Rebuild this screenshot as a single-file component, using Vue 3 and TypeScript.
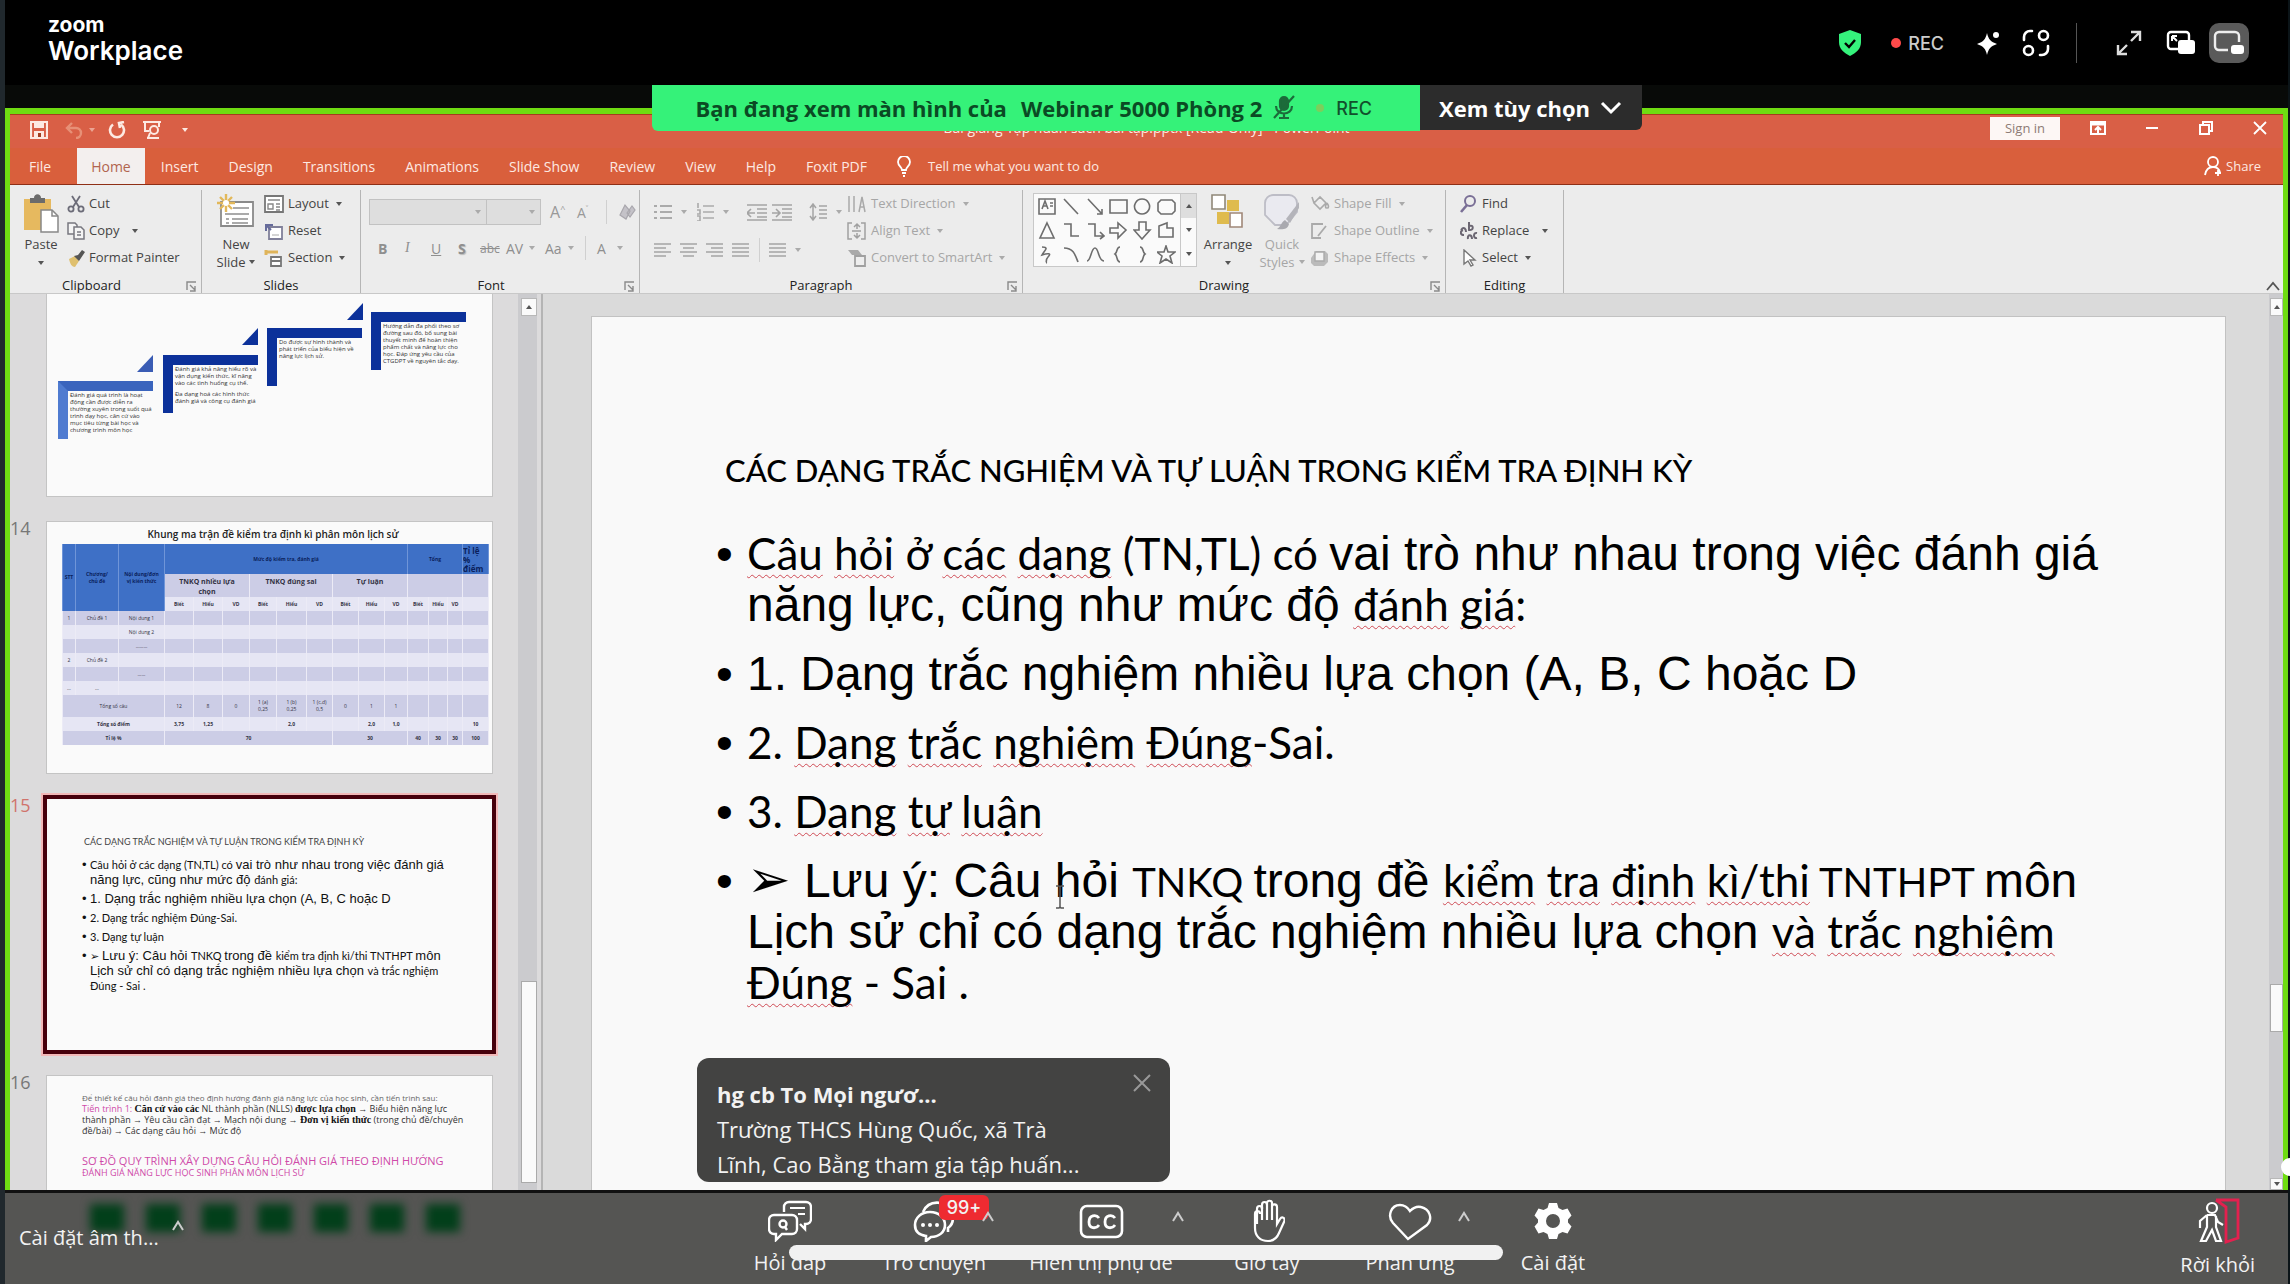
<script setup lang="ts">
import { h, type FunctionalComponent } from 'vue'

const icons: Record<string, string> = {
  shield: '<path d="M12 0 L23 4 V12 C23 19 18 23 12 26 C6 23 1 19 1 12 V4 Z" fill="#35f27c"/><path d="M7 13l4 4 6-7" fill="none" stroke="#000" stroke-width="2.4"/>',
  sparkle: '<path d="M11 3c1.500 6.500 3.500 8.500 10 11-6.500 2.500-8.500 4.500-10 11-1.500-6.500-3.500-8.500-10-11C7.500 11.500 9.500 9.500 11 3z" fill="#fff"/><circle cx="20" cy="5" r="3" fill="#fff"/>',
  apps: '<g fill="none" stroke="#fff" stroke-width="2.600" stroke-linecap="round"><path d="M10 2H8a6 6 0 0 0-6 6v3"/><path d="M26 17v3a6 6 0 0 1-6 6h-2"/><rect x="17" y="2" width="9" height="9" rx="4.500"/><rect x="2" y="17" width="9" height="9" rx="4.500"/></g>',
  expand: '<g fill="none" stroke="#ddd" stroke-width="2.400"><path d="M15 2h9v9M24 2L15 11M11 24H2v-9M2 24l9-9"/></g>',
  pipDark: '<rect x="2" y="2" width="21" height="17" rx="3" fill="none" stroke="#fff" stroke-width="2.400"/><path d="M6 6h5M6 6v5M6 6l5 5" stroke="#fff" stroke-width="2" fill="none"/><rect x="12" y="10" width="17" height="14" rx="3" fill="#fff"/>',
  pip: '<path d="M15 20H6a4 4 0 0 1-4-4V6a4 4 0 0 1 4-4h16a4 4 0 0 1 4 4v6" fill="none" stroke="#eee" stroke-width="2.400"/><rect x="18" y="15" width="13" height="9" rx="3" fill="#fff"/>',
  mic: '<g stroke="#1c6b3a" fill="none" stroke-width="2.200"><rect x="8" y="2" width="8" height="13" rx="4" fill="#1c6b3a"/><path d="M4 11c0 10 16 10 16 0M12 19v4M7 23h10M2 23L22 1"/></g>',
  down: '<path d="M2 3l9 9 9-9" fill="none" stroke="#fff" stroke-width="3"/>',
  save: '<path d="M1 1h16v16H1z" fill="none" stroke="#fde9e2" stroke-width="2.200"/><path d="M4 1h10v6H4z" fill="#fde9e2"/><path d="M4 10h10v7H4z" fill="#fde9e2"/><path d="M8 12h3v4H8z" fill="#a23f22"/>',
  undo: '<path d="M7 2L2 7l5 5M2 7h9a5 5 0 0 1 0 10" fill="none" stroke="#e79077" stroke-width="2.400"/>',
  redo: '<path d="M5 3.500A7 7 0 1 0 13 3.500M16 1l-5 1 1 5" fill="none" stroke="#fde9e2" stroke-width="2.600"/>',
  show: '<g fill="none" stroke="#fde9e2" stroke-width="2"><path d="M0 1h18M2 2v8h4M16 2v4"/><circle cx="11" cy="9" r="4"/><path d="M4 17h12M7 12l-2 5"/></g>',
  ribbonOpt: '<path d="M1 1h14v12H1z" fill="none" stroke="#fff" stroke-width="2"/><path d="M1 3h14" stroke="#fff" stroke-width="3"/><path d="M8 12V6M5 9l3-3 3 3" stroke="#fff" stroke-width="2" fill="none"/>',
  min: '<path d="M2 8h12" stroke="#fff" stroke-width="2"/>',
  restore: '<path d="M2 5h9v9H2zM5 5V2h9v9h-3" fill="none" stroke="#fff" stroke-width="2"/>',
  close: '<path d="M2 2l12 12M14 2L2 14" stroke="#fff" stroke-width="1.800"/>',
  share: '<g fill="none" stroke="#fff" stroke-width="1.800"><circle cx="9" cy="6" r="5"/><path d="M1 19c1-6 4-8 8-8s6 2 7 5M14 14v6M11 17h6"/></g>',
  bulb: '<g fill="none" stroke="#fff" stroke-width="1.800"><path d="M5 14c0-3-4-4-4-8a6 6 0 0 1 12 0c0 4-4 5-4 8zM5 17h4M6 20h2"/></g>',
  paste: '<path d="M1 5h27v31H1z" fill="#e6b95f"/><path d="M7 9V4h4c0-5 7-5 7 0h4v5z" fill="#6b6b6b"/><path d="M18 16h11l6 6v16H18z" fill="#fff" stroke="#888" stroke-width="1.500"/><path d="M29 16v6h6" fill="none" stroke="#888" stroke-width="1.500"/>',
  cut: '<g fill="none" stroke="#6c6c78" stroke-width="1.800"><path d="M5 1l7 11M13 1L6 12"/><circle cx="4" cy="14" r="2.600"/><circle cx="14" cy="14" r="2.600"/></g>',
  copy: '<g fill="#f4f4f4" stroke="#77777f" stroke-width="1.500"><path d="M1 1h7l2 2v9H1z"/><path d="M7 5h7l3 3v9H7z"/><path d="M10 10h4M10 13h4"/></g>',
  painter: '<path d="M2 10l6-3 4 5-4 6c-3 0-5-3-6-8z" fill="#dfc06f"/><path d="M7 7l5 5 2-3 4-6-3-2-4 5z" fill="#555"/>',
  newSlide: '<path d="M4 8h32v24H4z" fill="#fff" stroke="#8a8a8a" stroke-width="1.800"/><path d="M16 14h16M8 20h24M9 25h3M15 25h16M9 29h3M15 29h16" stroke="#aaa" stroke-width="1.800"/><g stroke="#e2b85a" stroke-width="2.400"><path d="M9 0v18M0 9h18M3 3l12 12M15 3L3 15"/></g><circle cx="9" cy="9" r="3" fill="#fff"/>',
  layout: '<path d="M1 1h18v16H1z" fill="#fff" stroke="#777" stroke-width="1.800"/><path d="M4 5h12M4 9h5v5H4zM12 9h4M12 12h4M12 15h4" fill="none" stroke="#888" stroke-width="1.400"/>',
  reset: '<path d="M5 5h13v12H5z" fill="#fff" stroke="#80809a" stroke-width="1.800"/><path d="M2 9V3h7M2 3l5 5" stroke="#666b9b" stroke-width="2" fill="none"/><path d="M8 13h7" stroke="#aaa"/>',
  section: '<path d="M2 3h12M2 1v5" stroke="#dfb45a" stroke-width="3"/><path d="M7 8h10v9H7zM7 12h10" fill="#fff" stroke="#777" stroke-width="1.800"/>',
  launch: '<path d="M1 9V1h9M4 4l5 5M9 5v5H4" fill="none" stroke="#8a8a8a" stroke-width="1.400"/>',
  eraser: '<path d="M2 12l5-10 5 6-4 8zM9 10l5-7 3 4-5 7z" fill="#c4c2c8" stroke="#a9a7ad" stroke-width="1.200"/>',
  bullets: '<path d="M0 3h3M0 9h3M0 15h3M6 3h12M6 9h12M6 15h12" stroke="#aaa" stroke-width="1.800"/>',
  numbers: '<path d="M2 0v5M1 7h3v4H1M1 13h3v5H1M7 3h11M7 9h11M7 15h11" fill="none" stroke="#aaa" stroke-width="1.600"/>',
  outdent: '<path d="M0 2h20M10 6h10M10 10h10M10 14h10M0 17h20M8 10H1M4 6l-4 4 4 4" fill="none" stroke="#a4a4a4" stroke-width="1.600"/>',
  indent: '<path d="M0 2h20M10 6h10M10 10h10M10 14h10M0 17h20M0 10h7M4 6l4 4-4 4" fill="none" stroke="#a4a4a4" stroke-width="1.600"/>',
  spacing: '<path d="M4 2v14M1 5l3-4 3 4M1 13l3 4 3-4M10 3h8M10 7h8M10 11h8M10 15h8" fill="none" stroke="#a4a4a4" stroke-width="1.500"/>',
  alignL: '<path d="M0 2h17M0 6h12M0 10h17M0 14h12" stroke="#a4a4a4" stroke-width="1.600"/>',
  alignC: '<path d="M0 2h17M3 6h11M0 10h17M3 14h11" stroke="#a4a4a4" stroke-width="1.600"/>',
  alignR: '<path d="M0 2h17M5 6h12M0 10h17M5 14h12" stroke="#a4a4a4" stroke-width="1.600"/>',
  alignJ: '<path d="M0 2h17M0 6h17M0 10h17M0 14h17" stroke="#a4a4a4" stroke-width="1.600"/>',
  textDir: '<path d="M2 1v16M7 1v16M12 17l3-15 3 15M13 12h4" fill="none" stroke="#a9a9a9" stroke-width="1.500"/>',
  alignText: '<path d="M5 1H1v16h4M14 1h4v16h-4M5 9h9M10 2v5M10 11v5M7 5l3-3 3 3M7 13l3 3 3-3" fill="none" stroke="#a0a0a0" stroke-width="1.500"/>',
  smart: '<path d="M1 1h10l4 5H5z" fill="#a9a9a9"/><path d="M8 7h10v10H8z" fill="#eee" stroke="#a0a0a0" stroke-width="1.800"/>',
  arrange: '<path d="M1 1h13v14H1z" fill="#fff" stroke="#908878" stroke-width="1.600"/><path d="M16 6h12v11H16zM6 18h12v12H6z" fill="#dfbb4e"/><path d="M19 19h12v14H19z" fill="#fff" stroke="#a08878" stroke-width="1.600"/>',
  quick: '<path d="M1 9a8 8 0 0 1 8-8h16a8 8 0 0 1 8 8v9L22 31H11L1 21z" fill="#eaeaf0" stroke="#bdbdc6" stroke-width="1.800"/><path d="M35 8L22 25l4 4 9-15z" fill="#b4b4ba"/><path d="M21 26l4 4c-1 5-6 6-12 5 4-2 4-7 8-9z" fill="#a9a9af"/>',
  fill: '<path d="M4 8l6-6 6 6-6 6zM4 8L2 2M17 8c2 3 2 5 0 5s-2-2 0-5" fill="#ededed" stroke="#aaa" stroke-width="1.600"/>',
  outline: '<path d="M13 2H2v14h9M16 4L8 14" fill="none" stroke="#aaa" stroke-width="1.800"/>',
  effects: '<path d="M6 2h9l3 3v8l-4 4H4l-3-3V9z" fill="#bbb"/><path d="M5 3h9v9H5z" fill="#f3f3f3" stroke="#aaa" stroke-width="1.400"/>',
  find: '<circle cx="10" cy="6" r="5" fill="none" stroke="#7a6f96" stroke-width="2"/><path d="M7 10l-6 7" stroke="#7a6f96" stroke-width="2.600"/>',
  replace: '<path d="M1 8c3-4 5-1 5 2M9 0v8c5 1 5-6 0-4" fill="none" stroke="#6b6672" stroke-width="2"/><path d="M3 8c-3 1-3 5 1 5M8 17c-1-5 4-5 4 0M17 11c-4-1-4 6 0 5" fill="none" stroke="#6b6672" stroke-width="2"/>',
  select: '<path d="M4 1v14l4-3 3 5 2-1-3-5h5z" fill="#fff" stroke="#777" stroke-width="1.400"/>',
  collapse: '<path d="M1 9l6-7 6 7" fill="none" stroke="#555" stroke-width="1.800"/>',
  qa: '<g fill="none" stroke="#fff" stroke-width="2.400"><path d="M16 12V7a5 5 0 0 1 5-5h17a5 5 0 0 1 5 5v12a5 5 0 0 1-5 5h-1v5l-5-5"/><path d="M22 8h15M30 14h7" stroke-width="2"/><path d="M6 15h18a5 5 0 0 1 5 5v9a5 5 0 0 1-5 5H14l-6 6v-6H6a5 5 0 0 1-5-5v-9a5 5 0 0 1 5-5z"/><circle cx="15" cy="24" r="3.500"/><path d="M17 27l2 3"/></g>',
  chat: '<g fill="none" stroke="#fff" stroke-width="2.600"><path d="M10 12C14 3 22 2 28 3M39 14c2 6 0 11-4 14v4"/><path d="M17 12c9 0 15 6 15 13s-6 12-14 12l-5 4v-5C6 35 2 31 2 25 2 18 8 12 17 12z"/></g><g fill="#fff"><circle cx="10" cy="25" r="2"/><circle cx="17" cy="25" r="2"/><circle cx="24" cy="25" r="2"/></g>',
  cc: '<rect x="2" y="2" width="41" height="31" rx="6" fill="none" stroke="#fff" stroke-width="2.600"/><path d="M20 14c-3-4-10-3-10 4s7 7 10 3M36 14c-3-4-10-3-10 4s7 7 10 3" fill="none" stroke="#fff" stroke-width="2.800"/>',
  hand: '<path d="M8 24V9c0-4 5-4 5 0V5c0-4 5-4 5 0V3c0-3 5-3 5 0v4c0-4 5-3 5 0v17l3-5c2-3 6-1 4 3l-5 11c-2 5-5 8-11 8-8 0-13-5-13-13V14c0-4 5-4 5 0" transform="translate(0 1)" fill="none" stroke="#fff" stroke-width="2.200"/><path d="M13 8v13M18 6v15M23 8v13" stroke="#fff" stroke-width="2.200"/>',
  heart: '<path d="M20 37L5 21C-1 14 3 3 12 3c5 0 8 3 10 6 3-3 7-5 11-4 9 2 12 12 6 18z" fill="none" stroke="#fff" stroke-width="2.400"/>',
  gear: '<path fill-rule="evenodd" d="M15 1h8l1.500 5 4 2 5-1.500 4 7-3.500 4v3l3.500 4-4 7-5-1.500-4 2L23 37h-8l-1.500-5-4-2-5 1.500-4-7L4 20.500v-3L.5 13.500l4-7 5 1.500 4-2zM19 12a7 7 0 1 0 0 14 7 7 0 0 0 0-14z" fill="#fff"/>',
  leave: '<g fill="none" stroke="#fff" stroke-width="2.200"><circle cx="16" cy="10" r="5"/><path d="M11 17l-7 6v7M11 17h8l3 7 5 3M11 17v12L5 43h5l6-11 4 11h5l-5-14V18"/></g><path d="M20 2h22v38l-12 4V9L20 2" fill="none" stroke="#e3214f" stroke-width="2.800"/>',
  up: '<path d="M4 12l5-8 5 8" fill="none" stroke="#ccc" stroke-width="2"/>',
}

const Ico: FunctionalComponent<{ n: string; w: number; h: number }> = (p) =>
  h('svg', { width: p.w, height: p.h, viewBox: `0 0 ${p.w} ${p.h}`, 'aria-hidden': 'true', style: 'flex:none;display:block', innerHTML: icons[p.n] })
Ico.props = ['n', 'w', 'h']

const tabs = ['File', 'Home', 'Insert', 'Design', 'Transitions', 'Animations', 'Slide Show', 'Review', 'View', 'Help', 'Foxit PDF']

const shapes = [
  'M1 2h16v15H1zM4 12l3-8 3 8M5 9h4M12 6h3M12 9h3', 'M2 2l14 15', 'M2 2l14 15M16 12v5h-5', 'M1 3h17v13H1z', 'M9 2a7.500 7.500 0 1 0 .1 0z', 'M4 3h11l3 3v8l-3 3H4l-3-3V6z',
  'M9 2l7 15H2z', 'M2 3h7v12h8', 'M2 3h7v12h8M14 11l4 4-4 3', 'M1 7h8V2l8 7-8 8v-5H1z', 'M6 1h7v8h4l-8 9-8-9h5z', 'M2 5l8-3v5h6v9H2z',
  'M4 2c8 0 2 4 0 8 6-2 10-2 6 2-3 3-1 6-2 6', 'M2 3c9 0 11 6 14 14', 'M1 16C5 16 5 3 9 3s3 13 9 13', 'M11 2c-4 0-2 5-5 7 3 2 1 8 5 8', 'M7 2c4 0 2 5 5 7-3 2-1 8-5 8', 'M9 1l2 6h7l-5 4 2 7-6-4-6 4 2-7-5-4h7z',
]

// Run kinds: Arial text by default, c = Calibri-like, w = Calibri-like with a spelling mark, k = acronyms, p = arrow bullet
type Seg = { t: string; k?: 'c' | 'w' | 'k' | 'p' }
type Line = Seg[]
const a = (t: string): Seg => ({ t })
const c = (t: string): Seg => ({ t, k: 'c' })
const w = (t: string): Seg => ({ t, k: 'w' })
const k = (t: string): Seg => ({ t, k: 'k' })
const segClass = (s: Seg) => (s.k === 'k' ? ['c', 'acr'] : s.k === 'p' ? ['c', 'ptr'] : s.k === 'w' ? ['c', 'sq'] : s.k ? ['c'] : ['a'])
const slideTitle = 'CÁC DẠNG TRẮC NGHIỆM VÀ TỰ LUẬN TRONG KIỂM TRA ĐỊNH KỲ'
const items: Line[][] = [
  [
    [w('Câu'), c(' '), w('hỏi'), c(' ở '), w('các'), c(' '), w('dạng'), c(' (TN,TL) có '), a('vai trò như nhau trong việc đánh giá')],
    [a('năng lực, cũng như mức độ '), w('đánh'), c(' '), w('giá'), c(':')],
  ],
  [[a('1. Dạng trắc nghiệm nhiều lựa chọn (A, B, C hoặc D')]],
  [[c('2. '), w('Dạng'), c(' '), w('trắc'), c(' '), w('nghiệm'), c(' '), w('Đúng'), c('-Sai.')]],
  [[c('3. '), w('Dạng'), c(' '), w('tự'), c(' '), w('luận')]],
  [
    [{ t: '➢ ', k: 'p' }, a('Lưu ý: Câu hỏi '), k('TNKQ '), a('trong đề '), w('kiểm'), c(' '), w('tra'), c(' '), w('định'), c(' '), w('kì/thi'), k(' TNTHPT '), a('môn')],
    [a('Lịch sử chỉ có dạng trắc nghiệm nhiều lựa chọn '), w('và'), c(' '), w('trắc'), c(' '), w('nghiệm')],
    [w('Đúng'), c(' - Sai .')],
  ],
]

const steps = [
  { cls: 's1', text: 'Đánh giá quá trình là hoạt động cần được diễn ra thường xuyên trong suốt quá trình dạy học, căn cứ vào mục tiêu từng bài học và chương trình môn học' },
  { cls: 's2', text: 'Đánh giá khả năng hiểu rõ và vận dụng kiến thức, kĩ năng vào các tình huống cụ thể.', more: 'Đa dạng hoá các hình thức đánh giá và công cụ đánh giá' },
  { cls: 's3', text: 'Do được sự hình thành và phát triển của biểu hiện về năng lực lịch sử.' },
  { cls: 's4', text: 'Hướng dẫn đa phối theo sơ đường sau đó, bổ sung bài thuyết minh để hoàn thiện phẩm chất và năng lực cho học. Đáp ứng yêu cầu của CTGDPT về nguyên tắc dạy.' },
]

const blank = (n: number) => Array.from({ length: n }, () => '')
const levels = ['Biết', 'Hiểu', 'VD', 'Biết', 'Hiểu', 'VD', 'Biết', 'Hiểu', 'VD', 'Biết', 'Hiểu', 'VD', '']
const colWidths = [13, 43, 46, 29, 29, 27, 27, 30, 26, 26, 26, 23, 21, 19, 15, 26]
const topics = [
  ['1', 'Chủ đề 1', 'Nội dung 1'],
  ['', '', 'Nội dung 2'],
  ['', '', '………'],
  ['2', 'Chủ đề 2', ''],
  ['', '', '……'],
  ['…', '…', ''],
]
const blurs = 7
</script>

<template>
  <div class="app">
    <header class="top">
      <div class="logo"><span class="z">zoom</span><span class="wp">Workplace</span></div>
      <nav class="top-tools" aria-label="Meeting">
        <Ico n="shield" :w="24" :h="26" />
        <span class="rec"><i class="dot"></i>REC</span>
        <button class="bare spk" aria-label="AI"><Ico n="sparkle" :w="24" :h="26" /></button>
        <button class="bare" aria-label="Apps"><Ico n="apps" :w="28" :h="28" /></button>
        <i class="vsep"></i>
        <button class="bare exp" aria-label="Expand"><Ico n="expand" :w="26" :h="26" /></button>
        <button class="bare pd" aria-label="Swap"><Ico n="pipDark" :w="30" :h="26" /></button>
        <button class="bare on" aria-label="Picture in picture"><Ico n="pip" :w="32" :h="26" /></button>
      </nav>
    </header>

    <main class="share">
      <div class="banner">
        <div class="green">
          <span>Bạn đang xem màn hình của</span><span>Webinar 5000 Phòng 2</span>
          <Ico n="mic" :w="24" :h="26" /><i class="dot2"></i><span class="r">REC</span>
        </div>
        <button class="opts">Xem tùy chọn<Ico n="down" :w="22" :h="16" /></button>
      </div>

      <div class="ppt">
        <div class="titlebar">
          <div class="qat">
            <Ico n="save" :w="18" :h="18" /><Ico n="undo" :w="18" :h="18" /><i class="car lt near"></i>
            <Ico class="redo" n="redo" :w="18" :h="18" /><Ico n="show" :w="18" :h="18" /><i class="car lt"></i>
          </div>
          <div class="doc">Bài giảng Tập huấn sách bài tập.pptx [Read-Only] - PowerPoint</div>
          <div class="win">
            <button class="signin">Sign in</button>
            <button class="bare" aria-label="Ribbon options"><Ico n="ribbonOpt" :w="16" :h="14" /></button>
            <button class="bare" aria-label="Minimize"><Ico n="min" :w="16" :h="16" /></button>
            <button class="bare" aria-label="Restore"><Ico n="restore" :w="16" :h="16" /></button>
            <button class="bare" aria-label="Close"><Ico n="close" :w="16" :h="16" /></button>
          </div>
        </div>
        <div class="tabs">
          <button v-for="t in tabs" :key="t" class="tab" :class="{ active: t === 'Home', file: t === 'File' }">{{ t }}</button>
          <span class="tell"><Ico n="bulb" :w="14" :h="21" />Tell me what you want to do</span>
          <button class="sharebtn"><Ico n="share" :w="18" :h="21" />Share</button>
        </div>

        <div class="ribbon">
          <section class="grp g-clip">
            <div class="body">
              <button class="big"><Ico n="paste" :w="36" :h="40" /><span>Paste</span><i class="car"></i></button>
              <div class="col">
                <button class="row"><Ico n="cut" :w="18" :h="18" />Cut</button>
                <button class="row"><Ico n="copy" :w="18" :h="18" />Copy<i class="car far"></i></button>
                <button class="row"><Ico n="painter" :w="18" :h="18" />Format Painter</button>
              </div>
            </div>
            <div class="lab">Clipboard</div><Ico class="launch" n="launch" :w="11" :h="11" />
          </section>
          <section class="grp g-slides">
            <div class="body">
              <button class="big"><Ico n="newSlide" :w="38" :h="40" /><span>New</span><span class="in">Slide<i class="car"></i></span></button>
              <div class="col">
                <button class="row"><Ico n="layout" :w="20" :h="18" />Layout<i class="car"></i></button>
                <button class="row"><Ico n="reset" :w="20" :h="18" />Reset</button>
                <button class="row"><Ico n="section" :w="20" :h="18" />Section<i class="car"></i></button>
              </div>
            </div>
            <div class="lab">Slides</div>
          </section>
          <section class="grp g-font">
            <div class="body stack">
              <div class="frow">
                <span class="combo wide"><i class="car dim"></i></span><span class="combo"><i class="car dim"></i></span>
                <b class="fa">A<sup>^</sup></b><b class="fa sm">A<sup>˅</sup></b><i class="ms"></i><Ico n="eraser" :w="18" :h="18" />
              </div>
              <div class="frow two">
                <b>B</b><i class="it">I</i><u>U</u><b class="sh">S</b><s>abc</s><span class="av">AV</span><i class="car dim"></i><span class="aa">Aa</span><i class="car dim"></i><i class="ms"></i><span class="ac">A</span><i class="car dim"></i>
              </div>
            </div>
            <div class="lab fl">Font</div><Ico class="launch" n="launch" :w="11" :h="11" />
          </section>
          <section class="grp g-para">
            <div class="body">
              <div class="pcol">
                <div class="prow one">
                  <Ico n="bullets" :w="18" :h="18" /><i class="car dim"></i><Ico n="numbers" :w="18" :h="18" /><i class="car dim"></i><i class="ms"></i>
                  <Ico n="outdent" :w="20" :h="18" /><Ico class="ind" n="indent" :w="20" :h="18" /><Ico n="spacing" :w="18" :h="18" /><i class="car dim"></i>
                </div>
                <div class="prow two">
                  <Ico n="alignL" :w="18" :h="16" /><Ico n="alignC" :w="18" :h="16" /><Ico n="alignR" :w="18" :h="16" /><Ico n="alignJ" :w="18" :h="16" /><i class="ms"></i><Ico n="alignJ" :w="18" :h="16" /><i class="car dim"></i>
                </div>
              </div>
              <div class="col off">
                <button class="row"><Ico n="textDir" :w="20" :h="18" />Text Direction<i class="car dim"></i></button>
                <button class="row"><Ico n="alignText" :w="20" :h="18" />Align Text<i class="car dim"></i></button>
                <button class="row"><Ico n="smart" :w="20" :h="18" />Convert to SmartArt<i class="car dim"></i></button>
              </div>
            </div>
            <div class="lab pl">Paragraph</div><Ico class="launch" n="launch" :w="11" :h="11" />
          </section>
          <section class="grp g-draw">
            <div class="body">
              <div class="gallery">
                <div class="shapes">
                  <svg v-for="(d, i) in shapes" :key="i" width="19" height="19" viewBox="0 0 19 19"><path :d="d" fill="none" stroke="#6d6d6d" stroke-width="1.600" /></svg>
                </div>
                <div class="gs"><span class="g1"><i class="car dim upc"></i></span><span><i class="car"></i></span><span><i class="car"></i></span></div>
              </div>
              <button class="big arr"><Ico n="arrange" :w="34" :h="40" /><span>Arrange</span><i class="car"></i></button>
              <button class="big off qs"><Ico n="quick" :w="36" :h="40" /><span>Quick</span><span class="in">Styles<i class="car dim"></i></span></button>
              <div class="col off">
                <button class="row"><Ico n="fill" :w="20" :h="18" />Shape Fill<i class="car dim"></i></button>
                <button class="row"><Ico n="outline" :w="20" :h="18" />Shape Outline<i class="car dim"></i></button>
                <button class="row"><Ico n="effects" :w="20" :h="18" />Shape Effects<i class="car dim"></i></button>
              </div>
            </div>
            <div class="lab pl">Drawing</div><Ico class="launch" n="launch" :w="11" :h="11" />
          </section>
          <section class="grp g-edit">
            <div class="body">
              <div class="col">
                <button class="row"><Ico n="find" :w="18" :h="18" />Find</button>
                <button class="row"><Ico n="replace" :w="18" :h="18" />Replace<i class="car far"></i></button>
                <button class="row"><Ico n="select" :w="18" :h="18" />Select<i class="car"></i></button>
              </div>
            </div>
            <div class="lab">Editing</div>
          </section>
          <button class="bare collapse" aria-label="Collapse ribbon"><Ico n="collapse" :w="14" :h="11" /></button>
        </div>

        <div class="work">
          <aside class="panel">
            <ol class="thumbs">
              <li>
                <span class="num"></span>
                <div class="thumb">
                  <div v-for="s in steps" :key="s.cls" class="step" :class="s.cls"><p>{{ s.text }}</p><p v-if="s.more" class="more">{{ s.more }}</p></div>
                  <i class="tri t1"></i><i class="tri t2"></i><i class="tri t3"></i>
                </div>
              </li>
              <li>
                <span class="num">14</span>
                <div class="thumb th14">
                  <h3>Khung ma trận đề kiểm tra định kì phân môn lịch sử</h3>
                  <table>
                    <colgroup><col v-for="(cw, i) in colWidths" :key="i" :style="{ width: cw + 'px' }" /></colgroup>
                    <tbody>
                      <tr class="hd">
                        <th rowspan="3">STT</th><th rowspan="3">Chương/<br />chủ đề</th><th rowspan="3">Nội dung/đơn<br />vị kiến thức</th>
                        <th colspan="9">Mức độ kiểm tra, đánh giá</th><th colspan="3">Tổng</th><th class="tl">Tỉ lệ<br />%<br />điểm</th>
                      </tr>
                      <tr class="odd sub"><th colspan="3">TNKQ nhiều lựa<br />chọn</th><th colspan="3">TNKQ đúng sai</th><th colspan="3">Tự luận</th><td colspan="3"></td><td></td></tr>
                      <tr class="even"><th v-for="(l, i) in levels" :key="i">{{ l }}</th></tr>
                      <tr v-for="(t, i) in topics" :key="i" :class="i % 2 ? 'even' : 'odd'">
                        <td>{{ t[0] }}</td><td>{{ t[1] }}</td><td>{{ t[2] }}</td><td v-for="(_, j) in blank(13)" :key="j"></td>
                      </tr>
                      <tr class="odd tall"><td colspan="3">Tổng số câu</td><td>12</td><td>8</td><td>0</td><td>1 (a)<br />0,25</td><td>1 (b)<br />0,25</td><td>1 (c,d)<br />0,5</td><td>0</td><td>1</td><td>1</td><td></td><td></td><td></td><td></td></tr>
                      <tr class="even b"><td colspan="3">Tổng số điểm</td><td>3,75</td><td>1,25</td><td></td><td></td><td>2,0</td><td></td><td></td><td>2,0</td><td>1,0</td><td></td><td></td><td></td><td>10</td></tr>
                      <tr class="odd b"><td colspan="3">Tỉ lệ %</td><td colspan="6">70</td><td colspan="3">30</td><td>40</td><td>30</td><td>30</td><td>100</td></tr>
                    </tbody>
                  </table>
                </div>
              </li>
              <li>
                <span class="num cur">15</span>
                <div class="thumb mini selected">
                  <h3>{{ slideTitle }}</h3>
                  <ul>
                    <li v-for="(it, i) in items" :key="i"><div v-for="(ln, j) in it" :key="j" class="ln"><span v-for="(s, n) in ln" :key="n" :class="segClass(s)">{{ s.t }}</span></div></li>
                  </ul>
                </div>
              </li>
              <li>
                <span class="num">16</span>
                <div class="thumb th16">
                  <p class="f">Để thiết kế câu hỏi đánh giá theo định hướng đánh giá năng lực của học sinh, cần tiến trình sau:</p>
                  <p><span class="pink">Tiến trình 1:</span> <b>Căn cứ vào các</b> NL thành phần (NLLS) <b>được lựa chọn</b> → Biểu hiện năng lực</p>
                  <p>thành phần → Yêu cầu cần đạt → Mạch nội dung → <b>Đơn vị kiến thức</b> (trong chủ đề/chuyên</p>
                  <p>đề/bài) → Các dạng câu hỏi → Mức độ</p>
                  <p class="ph">SƠ ĐỒ QUY TRÌNH XÂY DỰNG CÂU HỎI ĐÁNH GIÁ THEO ĐỊNH HƯỚNG</p>
                  <p class="ph2">ĐÁNH GIÁ NĂNG LỰC HỌC SINH PHÂN MÔN LỊCH SỬ</p>
                </div>
              </li>
            </ol>
            <div class="sb"><span class="sbtn"><i class="car upc"></i></span><i class="s1"></i><i class="sth"></i><i class="s2"></i></div>
          </aside>
          <div class="stage">
            <article class="slide">
              <h1>{{ slideTitle }}</h1>
              <ul>
                <li v-for="(it, i) in items" :key="i"><div v-for="(ln, j) in it" :key="j" class="ln"><span v-for="(s, n) in ln" :key="n" :class="segClass(s)">{{ s.t }}</span></div></li>
              </ul>
              <svg class="ibeam" width="10" height="24" viewBox="0 0 10 24" aria-hidden="true"><path d="M1 1h3l1 1 1-1h3M5 2v20M1 23h3l1-1 1 1h3" fill="none" stroke="#555" stroke-width="1.500" /></svg>
            </article>
            <div class="sb right"><span class="sbtn"><i class="car upc"></i></span><i class="s1"></i><i class="sth"></i><i class="s2"></i><span class="sbtn dn"><i class="car"></i></span></div>
          </div>
        </div>
      </div>

      <div class="toast" role="status">
        <button class="bare x" aria-label="Close"><svg width="18" height="18" viewBox="0 0 18 18"><path d="M1 1l16 16M17 1L1 17" stroke="#999" stroke-width="2" /></svg></button>
        <b>hg cb To Mọi ngươ...</b>
        <p>Trường THCS Hùng Quốc, xã Trà<br />Lĩnh, Cao Bằng tham gia tập huấn...</p>
      </div>
      <i class="knob"></i>
    </main>

    <footer class="bar">
      <div class="blurs" aria-hidden="true"><i v-for="b in blurs" :key="b"></i></div>
      <button class="audio">Cài đặt âm th...<Ico n="up" :w="18" :h="14" /></button>
      <div class="mid">
        <button><span class="ic"><Ico n="qa" :w="44" :h="42" /></span>Hỏi đáp</button>
        <button><span class="ic"><Ico n="chat" :w="42" :h="42" /><em>99+</em></span>Trò chuyện<Ico class="uc" n="up" :w="18" :h="14" /></button>
        <button><span class="ic"><Ico n="cc" :w="45" :h="35" /></span>Hiển thị phụ đề<Ico class="uc" n="up" :w="18" :h="14" /></button>
        <button><span class="ic"><Ico n="hand" :w="36" :h="44" /></span>Giơ tay</button>
        <button><span class="ic"><Ico n="heart" :w="45" :h="39" /></span>Phản ứng<Ico class="uc" n="up" :w="18" :h="14" /></button>
        <button><span class="ic"><Ico n="gear" :w="38" :h="38" /></span>Cài đặt</button>
        <i class="home"></i>
      </div>
      <button class="leave"><Ico n="leave" :w="44" :h="46" />Rời khỏi</button>
    </footer>
  </div>
</template>

<style>
body { margin: 0; background: #000; }
</style>

<style scoped>
* { box-sizing: border-box; }
.app { height: 100vh; display: flex; flex-direction: column; padding: 0 2px 0 5px; background: linear-gradient(90deg, #20282d 5px, #0b1418 5px); font-family: "Open Sans", "Noto Sans", sans-serif; overflow: hidden; }
button { font: inherit; color: inherit; background: none; border: 0; padding: 0; margin: 0; white-space: nowrap; cursor: pointer; }
p, h1, h3, ul, ol { margin: 0; padding: 0; }
ul, ol { list-style: none; }
.bare { display: flex; align-items: center; justify-content: center; }

.top { height: 85px; flex: none; background: #000; display: flex; justify-content: space-between; color: #fff; }
.logo { padding: 12px 0 0 43px; display: flex; flex-direction: column; font-family: Inter, sans-serif; }
.z { font-size: 21px; line-height: 26px; font-weight: 700; }
.wp { font-size: 26px; line-height: 26px; font-weight: 600; }
.top-tools { display: flex; align-items: center; height: 40px; margin: 23px 39px 0 0; }
.rec { display: flex; align-items: center; gap: 7px; margin: 0 32px 0 29px; font: 500 18px Inter, sans-serif; color: #ccc; }
.dot { width: 10px; height: 10px; border-radius: 50%; background: #ff4a4a; }
.spk { margin-right: 22px; }
.vsep { width: 1px; height: 40px; background: #555; margin: 0 39px 0 26px; }
.exp { margin-right: 24px; }
.pd { margin-right: 13px; }
.on { width: 40px; height: 40px; border-radius: 10px; background: #5a5a5a; }

.share { flex: 1; min-height: 0; position: relative; display: flex; flex-direction: column; padding-top: 23px; background: #080a08; }
.banner { position: absolute; z-index: 3; top: 0; left: 0; right: 0; display: flex; justify-content: center; align-items: flex-start; }
.green { height: 46px; width: 768px; padding-left: 44px; display: flex; align-items: center; background: #35f279; border-radius: 0 0 0 6px; color: #0b4a24; font-size: 22px; font-weight: 700; white-space: nowrap; }
.green span + span { margin-left: 14px; margin-right: 10px; }
.dot2 { width: 8px; height: 8px; border-radius: 50%; background: #7ccf5c; margin: 0 0 0 20px; }
.green .r { margin-left: 12px; font: 500 18px Inter, sans-serif; color: #12502c; }
.opts { height: 45px; width: 222px; display: flex; align-items: center; justify-content: center; gap: 10px; background: #2c2c2c; color: #fff; font-size: 22px; font-weight: 700; border-radius: 0 0 6px 0; }

.ppt { flex: 1; min-height: 0; display: flex; flex-direction: column; border: solid #6fdc12; border-width: 6px 5px 0; background: #dadada; }
.titlebar { height: 34px; flex: none; display: grid; grid-template-columns: 1fr auto 1fr; align-items: start; background: #d95f46; color: #fde9e2; border-top: 1px solid #a63c20; }
.qat, .win { display: flex; align-items: center; height: 30px; }
.qat { padding-left: 20px; gap: 17px; }
.near { margin: 0 -4px 0 -11px; opacity: 0.5; }
.redo + svg + .car { margin-left: 4px; }
.doc { font-size: 14px; line-height: 26px; white-space: nowrap; }
.win { justify-content: flex-end; gap: 38px; padding-right: 15px; height: 26px; }
.signin { width: 70px; height: 23px; background: #fdf7f5; color: #8d7b76; font-size: 13px; margin-right: -8px; }
.tabs { height: 37px; flex: none; display: flex; align-items: stretch; background: #d95f3c; border-bottom: 1px solid #8f2f16; color: #fde9e2; font-size: 14px; }
.tab { padding: 1px 14px 0 16px; }
.tab.file { padding: 1px 26px 0 19px; }
.tab.active { background: #f3efee; color: #b1644e; padding: 1px 14px 0; }
.tell { display: flex; align-items: center; gap: 17px; margin-left: 16px; white-space: nowrap; font-size: 13px; }
.sharebtn { margin-left: auto; margin-right: 22px; display: flex; align-items: center; gap: 4px; font-size: 13px; }

.car { display: inline-block; flex: none; width: 0; height: 0; border: 3px solid transparent; border-top: 4px solid #555; border-bottom: 0; }
.car.lt { border-top-color: #fde9e2; }
.car.dim { border-top-color: #aaa; }
.car.upc { border-top: 0; border-bottom: 4px solid #555; }
.ribbon { height: 109px; flex: none; display: flex; position: relative; background: #ececec; border-bottom: 1px solid #c8c8c8; color: #444; font-size: 13px; }
.grp { position: relative; border-right: 1px solid #b5b5b5; margin: 5px 0 0; display: flex; flex-direction: column; justify-content: space-between; flex: none; }
.body { display: flex; align-items: flex-start; height: 84px; }
.lab { text-align: center; line-height: 15px; height: 15px; color: #222; }
.lab.fl { padding-right: 18px; }
.lab.pl { padding-right: 20px; }
.launch { position: absolute; right: 4px; bottom: 1px; }
.col { display: flex; flex-direction: column; }
.row { display: flex; align-items: center; gap: 4px; height: 27px; line-height: 27px; }
.row .car { margin-left: 3px; }
.row .far { margin-left: 9px; }
.big { display: flex; flex-direction: column; align-items: center; line-height: 18px; padding-top: 4px; }
.big > span:first-of-type { margin-top: 1px; }
.big > .car { margin-top: 8px; }
.in { display: flex; align-items: center; gap: 4px; }
.off { color: #a6a6a6; }
.g-clip { width: 192px; }
.g-clip .big { width: 36px; margin: 0 8px 0 13px; }
.g-clip .lab { padding-right: 28px; }
.g-slides { width: 159px; }
.g-slides .big { width: 40px; margin: 0 8px 0 14px; }
.g-font { width: 279px; }
.stack { flex-direction: column; color: #999; }
.frow { display: flex; align-items: center; height: 26px; margin: 9px 0 0 8px; }
.combo { width: 55px; height: 26px; border: 1px solid #c2c2c2; background: #dedede; display: flex; align-items: center; justify-content: flex-end; padding-right: 5px; }
.combo.wide { width: 118px; margin-right: -1px; }
.fa { font-size: 16px; font-weight: 400; margin-left: 9px; width: 18px; }
.fa sup { font-size: 9px; }
.fa.sm { font-size: 14px; }
.ms { width: 1px; height: 24px; background: #d0d0d0; margin: 0 11px; }
.two { color: #8f8f8f; font-size: 14px; }
.frow.two { margin: 10px 0 0 17px; }
.frow.two > b:first-child { width: 27px; }
.it { width: 26px; font-family: "Liberation Serif", serif; }
.frow u { width: 27px; }
.sh { width: 22px; text-shadow: 1px 1px 1px #bbb; }
.frow s { width: 26px; font-size: 12px; }
.av { width: 23px; }
.aa { margin-left: 10px; width: 23px; }
.ac { width: 20px; }
.g-para { width: 383px; }
.pcol { width: 199px; padding-left: 14px; }
.prow { display: flex; align-items: center; height: 26px; }
.prow.one { margin-top: 9px; gap: 9px; }
.prow.one .ms { margin: 0; }
.prow .ind { margin: 0 8px 0 -4px; }
.prow.two { margin-top: 12px; gap: 8px; }
.prow.two .ms { margin: 0 1px; }
.g-para .col { margin-left: 8px; }
.g-draw { width: 423px; }
.gallery { width: 164px; height: 74px; margin: 3px 5px 0 10px; display: flex; background: #fafafa; border: 1px solid #c8c8c8; }
.shapes { flex: 1; display: grid; grid-template-columns: repeat(6, 1fr); place-items: center; padding: 0 2px; }
.gs { width: 16px; display: flex; flex-direction: column; border-left: 1px solid #c8c8c8; }
.gs span { flex: 1; display: flex; align-items: center; justify-content: center; }
.g1 { background: #dedede; }
.arr { width: 52px; }
.qs { width: 48px; margin: 0 4px; }
.g-edit { width: 118px; }
.g-edit .col { margin-left: 14px; }
.collapse { position: absolute; right: 3px; bottom: 1px; }

.work { flex: 1; min-height: 0; display: flex; }
.panel { flex: none; width: 533px; display: flex; border-right: 2px solid #b4b4b4; background: #dcdbdc; overflow: hidden; }
.thumbs { width: 508px; display: flex; flex-direction: column; gap: 26px; margin-top: -49px; }
.thumbs > li { display: flex; height: 251px; flex: none; }
.num { width: 37px; font-size: 18px; line-height: 12px; color: #777; }
.num.cur { color: #d0736c; }
.thumb { position: relative; width: 445px; height: 251px; background: #fafafa; box-shadow: 0 0 0 1px #c4c4c4; overflow: hidden; flex: none; white-space: nowrap; }
.selected { box-shadow: 0 0 0 4px #47000c, 0 0 0 6px #f3b8b8; }
.step { position: absolute; width: 95px; height: 58px; border: solid #0c319a; border-width: 10px 0 0 10px; }
.step p { width: 84px; font: 6px/7px "Open Sans", sans-serif; color: #333; white-space: normal; padding: 1px 0 0 2px; }
.step .more { padding-top: 4px; }
.step.s1 { left: 11px; top: 136px; border-color: #3a64bd #000 #000 #4f7bd0; }
.step.s2 { left: 116px; top: 110px; }
.step.s3 { left: 220px; top: 83px; }
.step.s4 { left: 324px; top: 67px; }
.tri { position: absolute; width: 16px; height: 17px; background: #0c319a; clip-path: polygon(100% 0, 100% 100%, 0 100%); }
.t1 { left: 90px; top: 110px; background: #3a5cb4; }
.t2 { left: 195px; top: 83px; }
.t3 { left: 300px; top: 58px; }
.th14 { padding: 3px 0 0 15px; }
.th14 h3 { font: 600 10px/19px "Open Sans", sans-serif; text-align: center; padding-right: 8px; color: #222; }
table { width: 426px; table-layout: fixed; border-collapse: collapse; font: 5px/7px "Open Sans", sans-serif; color: #334; }
tr { height: 14px; }
.hd { height: 30px; }
.sub { height: 23px; }
.tall { height: 22px; }
th, td { padding: 0; text-align: center; border: 1px solid #ecebf6; border-width: 0 1px; overflow: hidden; }
.hd th { background: #3e70c6; color: #0a1f5c; border-color: #6f95d8; }
.hd .tl { font-size: 8px; line-height: 9px; text-align: left; font-weight: 700; }
.sub th { font-size: 7px; line-height: 10px; vertical-align: top; padding-top: 3px; }
.odd { background: #cccde6; }
.even { background: #e6e6f4; }
.b { font-weight: 700; }
.mini { padding: 36px 0 0 37px; }
.mini h3 { font: 400 9px/14px Lato, sans-serif; color: #444; margin-bottom: 8px; }
.mini ul { color: #111; font: 13px/15px "Liberation Sans", sans-serif; }
.mini ul li { position: relative; padding-left: 6px; margin-bottom: 4px; }
.mini ul li::before, .slide li::before { content: "•"; position: absolute; left: 0; }
.mini ul li::before { left: -2px; }
.mini .c { font: 11px/0 Lato, "DejaVu Sans", sans-serif; }
.mini .a { line-height: 0; }
.th16 { padding: 16px 0 0 35px; font: 9px/11px "Open Sans", sans-serif; color: #333; }
.th16 .f { font-size: 8px; color: #666; }
.th16 b { font-family: "Liberation Serif", serif; font-size: 10px; color: #111; }
.pink { color: #cf4aa9; }
.ph { color: #cf4aa9; font-size: 11px; line-height: 14px; margin-top: 18px; }
.ph2 { color: #cf4aa9; font-size: 9px; line-height: 10px; }
.sb { width: 19px; flex: none; display: flex; flex-direction: column; padding: 4px 0 0 3px; background: #cbcbce; }
.sbtn { height: 18px; flex: none; background: #fafafa; border: 1px solid #b8b8b8; display: flex; align-items: center; justify-content: center; }
.s1 { flex: 667 0 0; }
.sth { flex: 200 0 0; background: #fafafa; border: 1px solid #aaa; }
.s2 { flex: 7 0 0; }
.stage { flex: 1; display: flex; min-width: 0; background: #dadada; padding-left: 48px; }
.slide { position: relative; flex: 1; margin: 22px 43px 0 0; background: #f9f9f9; border: 1px solid #c2c2c2; border-bottom: 0; padding: 131px 0 0 124px; color: #000; white-space: nowrap; overflow: hidden; }
.slide h1 { font: 500 31px/44px Lato, sans-serif; margin: 0 0 36px 9px; }
.slide ul { font: 48px/51px "Liberation Sans", sans-serif; }
.slide li { position: relative; padding-left: 31px; margin-bottom: 18px; }
.ln { white-space: pre; }
.slide .c { font: 44px/0 Lato, "DejaVu Sans", sans-serif; }
.slide .acr { font-size: 40px; }
.slide .ptr { font-size: 52px; }
.slide .a { line-height: 0; }
.slide .sq { text-decoration: underline wavy #cf4b55 1px; text-underline-offset: 4px; text-decoration-skip-ink: none; }
.ibeam { position: absolute; left: 463px; top: 568px; }
.right { width: 14px; padding-left: 1px; }
.right .s1 { flex-basis: 0; flex-grow: 670; }
.right .sth { flex-grow: 46; }
.right .s2 { flex-grow: 146; }
.right .dn { height: 12px; }
.toast { position: absolute; z-index: 4; left: 692px; bottom: 8px; width: 473px; height: 124px; border-radius: 12px; background: #434342; color: #f2f2f2; padding: 19px 20px 0; font-size: 22px; line-height: 35px; white-space: nowrap; }
.toast b { font-weight: 700; }
.x { position: absolute; right: 19px; top: 16px; }
.knob { position: absolute; right: -11px; bottom: 14px; width: 18px; height: 18px; border-radius: 50%; background: #fff; }

.bar { position: relative; height: 94px; flex: none; border-top: 3px solid #111; background: #555553; color: #f2f2f2; display: grid; grid-template-columns: minmax(0, 713fr) auto minmax(0, 664fr); font-size: 20px; }
.blurs { position: absolute; left: 85px; top: 11px; display: flex; gap: 22px; filter: blur(5px); }
.blurs i { width: 34px; height: 28px; background: #023f1a; }
.audio { position: relative; justify-self: start; align-self: start; display: flex; gap: 10px; margin: 31px 0 0 14px; line-height: 28px; }
.audio svg { margin-top: -6px; }
.mid { position: relative; display: grid; grid-template-columns: 144px 144px 190px 142px 144px 142px; }
.mid button { position: relative; display: flex; flex-direction: column; align-items: center; line-height: 24px; }
.ic { height: 46px; margin: 5px 0 7px; display: flex; align-items: center; position: relative; }
.ic em { position: absolute; left: 26px; top: -3px; height: 25px; width: 50px; border-radius: 6px; background: #ee2b31; font: 500 18px/25px Inter, sans-serif; text-align: center; }
.uc { position: absolute; right: 9px; top: 16px; }
.home { position: absolute; left: 71px; right: 121px; top: 52px; height: 15px; border-radius: 8px; background: #f1f1f1; }
.leave { justify-self: end; align-self: start; display: flex; flex-direction: column; align-items: center; gap: 9px; margin: 5px 33px 0 0; line-height: 24px; }
</style>
